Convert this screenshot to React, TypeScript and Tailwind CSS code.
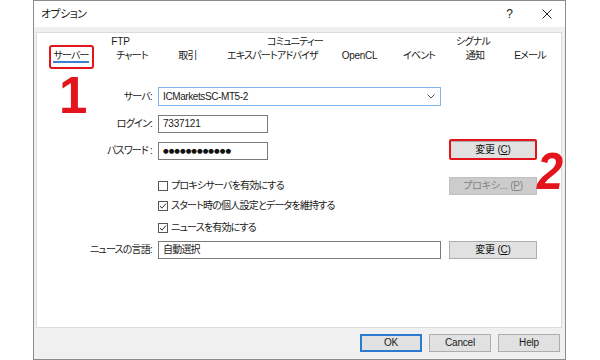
import React from 'react'

const RED = 'border-[#e3141c]'

const TOP_TABS = [
  { label: 'FTP', w: 'w-[165px]' },
  { label: 'コミュニティー', w: 'w-[184px]' },
  { label: 'シグナル', w: 'w-[172px]' },
]

const FRONT_TABS = [
  { label: 'サーバー', w: 'w-[66px]' },
  { label: 'チャート', w: 'w-[56px]' },
  { label: '取引', w: 'w-[55px]' },
  { label: 'エキスパートアドバイザ', w: 'w-[115px]' },
  { label: 'OpenCL', w: 'w-[59px]' },
  { label: 'イベント', w: 'w-[60px]' },
  { label: '通知', w: 'w-[52px]' },
  { label: 'Eメール', w: 'w-[58px]' },
]

// latin-only strings get less negative tracking than the kana
const isLatin = (s: string) => /^[\x20-\x7e]+$/.test(s)

function Button({
  children,
  disabled,
  className = '',
}: {
  children: React.ReactNode
  disabled?: boolean
  className?: string
}) {
  return (
    <div
      className={`flex h-[18px] w-[88px] items-center justify-center border tracking-[-0.2px] ${
        disabled
          ? 'border-[#bfbfbf] bg-[#cccccc] text-[#838383]'
          : 'border-[#adadad] bg-[#e1e1e1] text-[#111]'
      } ${className}`}
    >
      {children}
    </div>
  )
}

function Checkbox({ checked, label }: { checked?: boolean; label: string }) {
  return (
    <div className="flex items-center">
      <div className="flex h-[10px] w-[10px] items-center justify-center border border-[#555] bg-white">
        {checked && (
          <svg width="8" height="8" viewBox="0 0 8 8">
            <polyline points="1,4 3,6.2 7,1.5" fill="none" stroke="#333" strokeWidth="1" />
          </svg>
        )}
      </div>
      <span className="ml-[3px]">{label}</span>
    </div>
  )
}

function Label({ children }: { children: React.ReactNode }) {
  return <div className="w-[115px] text-right">{children}</div>
}

export default function App() {
  return (
    <div className="relative flex h-[360px] w-[600px] bg-white font-['Liberation_Sans','Noto_Sans_CJK_JP',sans-serif] text-[10px] leading-none tracking-[-0.8px] text-[#1a1a1a] [font-feature-settings:'palt']">
      {/* dialog */}
      <div className="ml-[33px] flex h-[360px] w-[533px] flex-col border border-[#8c8c8c] bg-[#f0f0f0]">
        {/* title bar */}
        <div className="flex h-[26px] items-center bg-white pl-[7px] pr-[13px]">
          <span className="text-[11px] tracking-[-0.6px]">オプション</span>
          <span className="ml-auto mr-[30px] text-[12px]">?</span>
          <svg width="10" height="10" viewBox="0 0 10 10">
            <path d="M0.5 0.5 L9.5 9.5 M9.5 0.5 L0.5 9.5" stroke="#222" strokeWidth="1" />
          </svg>
        </div>

        {/* tab control */}
        <div className="relative ml-[2px] mt-[5px] h-[296px] w-[526px] border border-[#dcdcdc] bg-white">
          <div className="ml-[1px] flex h-[15px] items-center pt-[3px]">
            {TOP_TABS.map((t) => (
              <div
                key={t.label}
                className={`${t.w} text-center ${isLatin(t.label) ? 'tracking-[-0.2px]' : ''}`}
              >
                {t.label}
              </div>
            ))}
          </div>
          <div className="ml-[1px] flex h-[16px]">
            {FRONT_TABS.map((t, i) => (
              <div key={t.label} className={`${t.w} flex justify-center`}>
                <span
                  className={`inline-block h-[15px] pt-[3px] ${
                    i === 0 ? 'border-b-2 border-[#3d7fd1]' : ''
                  } ${isLatin(t.label) ? 'tracking-[-0.3px]' : ''}`}
                >
                  {t.label}
                </span>
              </div>
            ))}
          </div>
          {/* highlight on server tab */}
          <div className={`absolute left-[12px] top-[12px] h-[24px] w-[45px] rounded-[3px] border-2 ${RED}`} />

          {/* pane content */}
          <div className="mt-[23px] flex flex-col">
            <div className="flex h-[19px] items-center">
              <Label>サーバ:</Label>
              <div className="ml-[6px] flex h-[19px] w-[283px] items-center border border-[#7eb4ea] bg-white pl-[4px] pr-[5px]">
                <span className="tracking-[-0.4px]">ICMarketsSC-MT5-2</span>
                <svg className="ml-auto" width="8" height="5" viewBox="0 0 8 5">
                  <polyline points="0.5,0.5 4,4 7.5,0.5" fill="none" stroke="#555" strokeWidth="1" />
                </svg>
              </div>
            </div>

            <div className="mt-[9px] flex h-[18px] items-center">
              <Label>ログイン:</Label>
              <div className="ml-[6px] flex h-[18px] w-[110px] items-center border border-[#7a7a7a] bg-white pl-[4px] tracking-[-0.2px]">
                7337121
              </div>
            </div>

            <div className="mt-[9px] flex h-[18px] items-center">
              <Label>パスワード :</Label>
              <div className="ml-[6px] flex h-[18px] w-[110px] items-center border border-[#7a7a7a] bg-white pl-[4px] font-['DejaVu_Sans',sans-serif] text-[6.5px] tracking-[0px] text-[#111]">
                ●●●●●●●●●●●●
              </div>
              <div className="relative ml-[181px]">
                <Button className="-mt-[3px]">
                  変更&nbsp;(<span className="underline">C</span>)
                </Button>
                <div className={`absolute -bottom-[1px] -top-[5px] left-0 right-0 rounded-[2px] border-2 ${RED}`} />
              </div>
            </div>

            <div className="mt-[17px] flex h-[18px] items-center">
              <div className="ml-[121px] w-[291px]">
                <Checkbox label="プロキシサーバを有効にする" />
              </div>
              <Button disabled>
                プロキシ...&nbsp;(<span className="underline">P</span>)
              </Button>
            </div>

            <div className="mt-[2px] flex h-[18px] items-center pl-[121px]">
              <Checkbox checked label="スタート時の個人設定とデータを維持する" />
            </div>

            <div className="mt-[4px] flex h-[18px] items-center pl-[121px]">
              <Checkbox checked label="ニュースを有効にする" />
            </div>

            <div className="mt-[4px] flex h-[18px] items-center">
              <Label>ニュースの言語:</Label>
              <div className="ml-[6px] flex h-[18px] w-[283px] items-center border border-[#7a7a7a] bg-white pl-[4px]">
                自動選択
              </div>
              <Button className="ml-[8px]">
                変更&nbsp;(<span className="underline">C</span>)
              </Button>
            </div>
          </div>
        </div>

        {/* footer buttons */}
        <div className="mt-[6px] flex justify-end gap-[7px] pr-[5px] tracking-[-0.2px]">
          <div className="flex h-[18px] w-[62px] items-center justify-center border-2 border-[#2a7ad2] bg-[#e1e1e1]">
            OK
          </div>
          <div className="flex h-[18px] w-[62px] items-center justify-center border border-[#adadad] bg-[#e1e1e1]">
            Cancel
          </div>
          <div className="flex h-[18px] w-[62px] items-center justify-center border border-[#adadad] bg-[#e1e1e1]">
            Help
          </div>
        </div>
      </div>

      {/* annotation numbers */}
      <span className="absolute left-[59px] top-[70px] font-['Liberation_Sans',sans-serif] text-[51px] font-bold leading-none tracking-normal text-[#e3141c] [font-feature-settings:normal]">
        1
      </span>
      <span className="absolute left-[537px] top-[145px] origin-left scale-x-90 font-['Liberation_Sans',sans-serif] text-[52px] font-bold italic leading-none tracking-normal text-[#e3141c] [font-feature-settings:normal]">
        2
      </span>
    </div>
  )
}
